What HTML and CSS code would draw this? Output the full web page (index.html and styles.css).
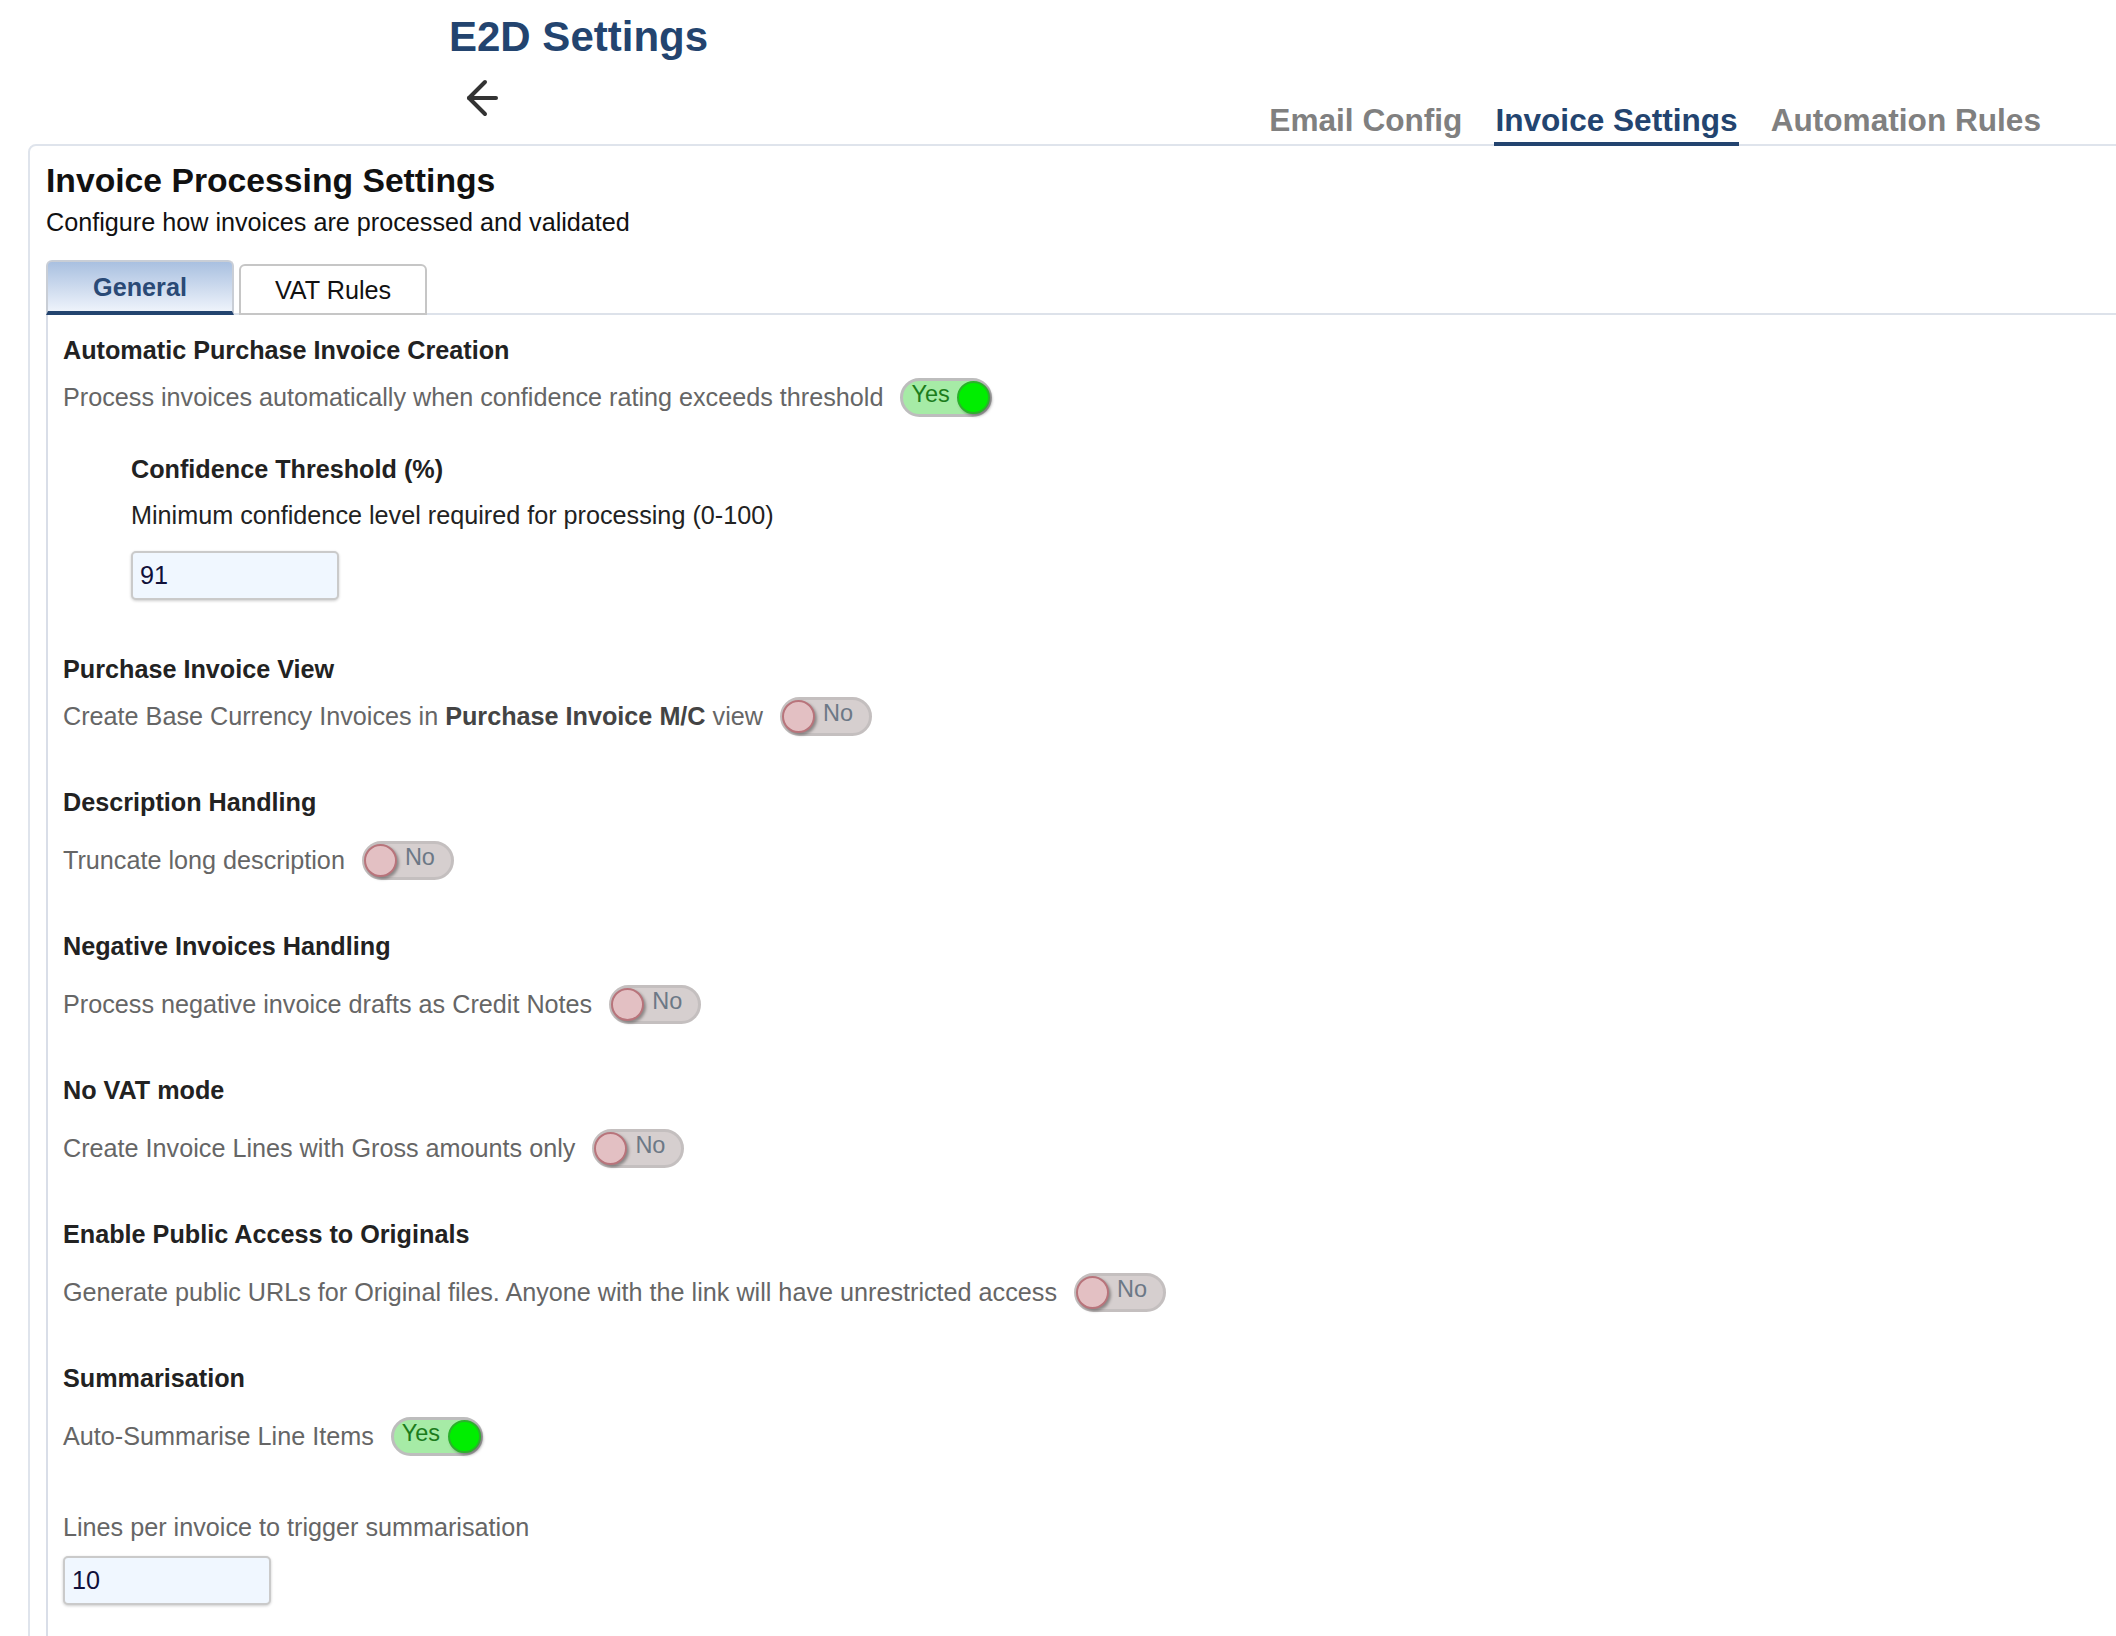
FILE: index.html
```html
<!DOCTYPE html>
<html lang="en">
<head>
    <meta charset="UTF-8">
    <meta name="viewport" content="width=device-width, initial-scale=1.0">
    <title>E2D Settings</title>
    <link rel="stylesheet" href="styles.css">
</head>
<body>

    <!-- Page header: title, back link and section tabs -->
    <header class="top-bar">
        <div class="page-head">
            <h1 class="page-title">E2D Settings</h1>
            <a class="back-link" href="#" aria-label="Back">
                <svg width="36" height="38" viewBox="0 0 36 38" fill="none" stroke="#333" stroke-width="4" stroke-linecap="round" stroke-linejoin="round">
                    <path d="M31 19H4"/>
                    <path d="M20 3L4 19L20 35"/>
                </svg>
            </a>
        </div>
        <nav class="main-tabs">
            <a href="#">Email Config</a>
            <a href="#" class="active">Invoice Settings</a>
            <a href="#">Automation Rules</a>
        </nav>
    </header>

    <!-- Invoice settings card -->
    <main class="card">
        <h2 class="card-title">Invoice Processing Settings</h2>
        <p class="card-sub">Configure how invoices are processed and validated</p>

        <div class="sub-tabs">
            <button class="sub-tab active">General</button>
            <button class="sub-tab">VAT Rules</button>
        </div>

        <div class="tab-panel">
            <section class="setting">
                <h3 class="setting-title tight">Automatic Purchase Invoice Creation</h3>
                <div class="setting-row">
                    <span class="setting-desc">Process invoices automatically when confidence rating exceeds threshold</span>
                    <span class="toggle on"><span class="toggle-label">Yes</span><span class="knob"></span></span>
                </div>
                <div class="sub-setting">
                    <h4 class="setting-title sub">Confidence Threshold (%)</h4>
                    <p class="field-hint dark">Minimum confidence level required for processing (0-100)</p>
                    <input class="num-input" type="text" value="91">
                </div>
            </section>

            <section class="setting after-field">
                <h3 class="setting-title tight">Purchase Invoice View</h3>
                <div class="setting-row">
                    <span class="setting-desc">Create Base Currency Invoices in <b>Purchase Invoice M/C</b> view</span>
                    <span class="toggle off"><span class="knob"></span><span class="toggle-label">No</span></span>
                </div>
            </section>

            <section class="setting">
                <h3 class="setting-title">Description Handling</h3>
                <div class="setting-row">
                    <span class="setting-desc">Truncate long description</span>
                    <span class="toggle off"><span class="knob"></span><span class="toggle-label">No</span></span>
                </div>
            </section>

            <section class="setting">
                <h3 class="setting-title">Negative Invoices Handling</h3>
                <div class="setting-row">
                    <span class="setting-desc">Process negative invoice drafts as Credit Notes</span>
                    <span class="toggle off"><span class="knob"></span><span class="toggle-label">No</span></span>
                </div>
            </section>

            <section class="setting">
                <h3 class="setting-title">No VAT mode</h3>
                <div class="setting-row">
                    <span class="setting-desc">Create Invoice Lines with Gross amounts only</span>
                    <span class="toggle off"><span class="knob"></span><span class="toggle-label">No</span></span>
                </div>
            </section>

            <section class="setting">
                <h3 class="setting-title">Enable Public Access to Originals</h3>
                <div class="setting-row">
                    <span class="setting-desc">Generate public URLs for Original files. Anyone with the link will have unrestricted access</span>
                    <span class="toggle off"><span class="knob"></span><span class="toggle-label">No</span></span>
                </div>
            </section>

            <section class="setting">
                <h3 class="setting-title">Summarisation</h3>
                <div class="setting-row">
                    <span class="setting-desc">Auto-Summarise Line Items</span>
                    <span class="toggle on"><span class="toggle-label">Yes</span><span class="knob"></span></span>
                </div>
                <div class="line-trigger">
                    <p class="field-hint">Lines per invoice to trigger summarisation</p>
                    <input class="num-input short-gap" type="text" value="10">
                </div>
            </section>
        </div>
    </main>

</body>
</html>
```

FILE: styles.css
```css
body {
    margin: 0;
    padding: 0;
    font-family: "Liberation Sans", Arial, Helvetica, sans-serif;
    color: #222;
    background-color: #fff;
    overflow: hidden;
}

/* Header */
.top-bar {
    display: flex;
    height: 144px;
}
.page-head {
    margin-left: 449px;
    padding-top: 13px;
}
.page-title {
    margin: 0;
    font-size: 42px;
    line-height: 48px;
    font-weight: bold;
    color: #23446f;
}
.back-link {
    display: block;
    width: 36px;
    height: 38px;
    margin: 18px 0 0 16px;
}
.back-link svg {
    display: block;
}
.main-tabs {
    display: flex;
    gap: 31px;
    margin-left: auto;
    margin-bottom: -2px;
    padding-right: 74px;
    align-self: flex-end;
    position: relative;
    z-index: 1;
}
.main-tabs a {
    font-size: 31.6px;
    line-height: 34px;
    font-weight: bold;
    color: #808080;
    text-decoration: none;
    padding: 0 1px 5px;
    border-bottom: 4px solid transparent;
}
.main-tabs a.active {
    color: #23446f;
    border-bottom-color: #23446f;
}

/* Card */
.card {
    display: block;
    margin: 0 -40px 0 28px;
    padding: 14px 0 0 16px;
    border: 2px solid #dfe4ec;
    border-radius: 8px;
}
.card-title {
    margin: 0;
    font-size: 33.7px;
    line-height: 40px;
    font-weight: bold;
    color: #111;
}
.card-sub {
    margin: 7px 0 0;
    font-size: 25.2px;
    line-height: 30px;
    color: #111;
}

/* General / VAT Rules tabs */
.sub-tabs {
    display: flex;
    align-items: flex-end;
    gap: 5px;
    margin-top: 23px;
    margin-bottom: -2px;
    position: relative;
    z-index: 1;
}
.sub-tab {
    box-sizing: border-box;
    width: 188px;
    height: 51px;
    padding: 0;
    font-family: inherit;
    font-size: 25.2px;
    line-height: 30px;
    color: #111;
    background: #fff;
    border: 2px solid #c6c6c6;
    border-radius: 6px 6px 0 0;
    cursor: pointer;
}
.sub-tab.active {
    height: 55px;
    font-weight: bold;
    color: #2a4a76;
    background: linear-gradient(to bottom, #a9c0e0, #eef3fb);
    border-color: #c9ced6;
    border-bottom: 4px solid #23446f;
}

.tab-panel {
    border-top: 2px solid #dde2ea;
    border-left: 2px solid #d9dee8;
    padding: 20px 0 80px 15px;
}

/* Setting blocks */
.setting {
    margin-top: 51px;
}
.setting:first-child {
    margin-top: 0;
}
.setting.after-field {
    margin-top: 54px;
}
.setting-title {
    margin: 0 0 23px;
    font-size: 25.2px;
    line-height: 30px;
    font-weight: bold;
    color: #222;
}
.setting-title.tight {
    margin-bottom: 12px;
}
.setting-title.sub {
    margin-bottom: 16px;
}
.setting-row {
    display: flex;
    align-items: center;
    gap: 17px;
    min-height: 40px;
}
.setting-desc {
    font-size: 25.2px;
    line-height: 30px;
    color: #666;
}
.setting-desc b {
    color: #444;
}

.sub-setting {
    margin: 37px 0 0 68px;
}
.field-hint {
    margin: 0;
    font-size: 25.2px;
    line-height: 30px;
    color: #666;
}
.field-hint.dark {
    color: #222;
}
.line-trigger {
    margin-top: 56px;
}

.num-input {
    display: block;
    box-sizing: border-box;
    width: 208px;
    height: 49px;
    margin-top: 21px;
    padding: 0 7px;
    font-family: inherit;
    font-size: 25.2px;
    color: #10103a;
    background-color: #f0f7ff;
    border: 2px solid #cacaca;
    border-radius: 5px;
    box-shadow: 0 1px 3px rgba(0, 0, 0, 0.2);
}
.num-input.short-gap {
    margin-top: 14px;
}

/* Yes / No switches */
.toggle {
    display: inline-flex;
    align-items: center;
    box-sizing: border-box;
    width: 92px;
    height: 39px;
    flex-shrink: 0;
    border: 3px solid #bdbdbd;
    border-radius: 20px;
    font-size: 23.5px;
}
.toggle.on {
    justify-content: space-between;
    padding-left: 8px;
    background-color: #a6eba6;
}
.toggle.off {
    background-color: #d6cfcf;
    border-color: #c4bfbf;
}
.knob {
    box-sizing: border-box;
    width: 33px;
    height: 33px;
    border-radius: 50%;
    box-shadow: 2px 2px 3px rgba(0, 0, 0, 0.35);
}
.toggle.on .knob {
    margin-right: -1px;
    background-color: #00ee00;
    border: 2px solid #2bb12b;
}
.toggle.off .knob {
    margin-left: -1px;
    background-color: #e3c0c3;
    border: 2px solid #b8747b;
}
.toggle-label {
    line-height: 1;
    padding-bottom: 4px;
}
.toggle.on .toggle-label {
    color: #1c7c1c;
}
.toggle.off .toggle-label {
    margin-left: 8px;
    color: #6c7886;
}
```
